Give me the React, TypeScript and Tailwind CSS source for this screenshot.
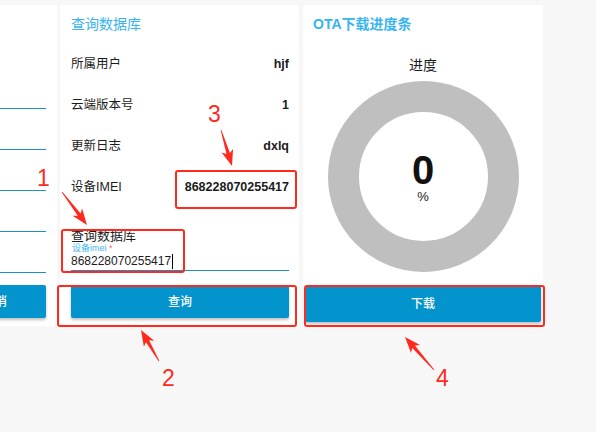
import React from 'react'

// Device OTA panel: query card + download progress card, with the red
// screenshot annotations (boxes, arrows, step numbers) laid over the top.

const RED = '#ff2a1d'

type Pt = [number, number]

function arrowPolygon(tail: Pt, tip: Pt) {
  const [tx, ty] = tail
  const [hx, hy] = tip
  const len = Math.hypot(hx - tx, hy - ty)
  const ux = (hx - tx) / len
  const uy = (hy - ty) / len
  const px = -uy
  const py = ux
  const headLen = 13
  const headW = 6
  const shaftW = 1.8
  const bx = hx - ux * headLen
  const by = hy - uy * headLen
  const pts: Pt[] = [
    [tx + px * 0.4, ty + py * 0.4],
    [bx + px * shaftW, by + py * shaftW],
    [bx - ux * 3 + px * headW, by - uy * 3 + py * headW],
    [hx, hy],
    [bx - ux * 3 - px * headW, by - uy * 3 - py * headW],
    [bx - px * shaftW, by - py * shaftW],
    [tx - px * 0.4, ty - py * 0.4],
  ]
  return pts.map((p) => p.join(',')).join(' ')
}

const arrows: { tail: Pt; tip: Pt }[] = [
  { tail: [62, 192], tip: [87, 225] },
  { tail: [221, 130], tip: [232, 166] },
  { tail: [159, 361], tip: [141, 330] },
  { tail: [434, 370], tip: [405, 337] },
]

const rows = [
  { label: '所属用户', value: 'hjf' },
  { label: '云端版本号', value: '1' },
  { label: '更新日志', value: 'dxlq' },
  { label: '设备IMEI', value: '868228070255417' },
]

export default function App() {
  return (
    <div className="relative h-[432px] w-[596px] overflow-hidden bg-[#f7f7f7] font-['Liberation_Sans','Noto_Sans_CJK_SC',sans-serif] text-[#1b1b1b]">
      <div className="flex pt-[5px]">
        {/* left card, mostly scrolled off */}
        <section className="-ml-[183px] mr-[3px] flex h-[321px] w-[240px] shrink-0 flex-col bg-white px-[11px] pt-[63px]">
          {[0, 1, 2, 3, 4].map((i) => (
            <div key={i} className="h-[41px] border-b border-[#1a8fc8]" />
          ))}
          <div className="mt-[12px] flex gap-[14px]">
            <button className="h-[33px] flex-1 rounded-[2px] bg-[#0494cd] text-[12px] font-medium text-white shadow-[0_2px_3px_rgba(0,0,0,0.25)]">
              确定
            </button>
            <button className="h-[33px] flex-1 rounded-[2px] bg-[#0494cd] text-[12px] font-medium text-white shadow-[0_2px_3px_rgba(0,0,0,0.25)]">
              取消
            </button>
          </div>
        </section>

        {/* query card */}
        <section className="mr-[4px] flex h-[321px] w-[239px] shrink-0 flex-col bg-white pl-[11px] pr-[10px] pt-[9px]">
          <h2 className="h-[20px] text-[14px] leading-[20px] text-[#38b4f0]">查询数据库</h2>
          <div className="mt-[10px]">
            {rows.map((r) => (
              <div key={r.label} className="flex h-[41px] items-center justify-between text-[12.5px]">
                <span>{r.label}</span>
                <span className="font-bold">{r.value}</span>
              </div>
            ))}
          </div>
          <div className="mt-[21px] border-b border-[#1a8fc8]">
            <div className="text-[13px] leading-[14px]">查询数据库</div>
            <div className="pl-[1px] text-[9px] leading-[10px] text-[#45b8f0]">
              设备imei <span className="text-[#ff6b6b]">*</span>
            </div>
            <div className="flex items-center text-[12px] leading-[17px]">
              868228070255417
              <span className="ml-[1px] inline-block h-[15px] w-px bg-black" />
            </div>
          </div>
          <button className="mt-[14px] h-[33px] rounded-[2px] bg-[#0494cd] text-[12px] font-medium text-white shadow-[0_2px_3px_rgba(0,0,0,0.25)]">
            查询
          </button>
        </section>

        {/* OTA progress card */}
        <section className="flex h-[321px] w-[240px] shrink-0 flex-col bg-white pt-[9px]">
          <h2 className="h-[20px] pl-[10px] text-[14px] font-semibold leading-[20px] text-[#38b4f0]">
            OTA下载进度条
          </h2>
          <div className="mt-[21px] text-center text-[14px] leading-[20px]">进度</div>
          <div className="mx-auto mt-[6px] flex h-[191px] w-[191px] flex-col items-center justify-center rounded-full border-[31px] border-[#bfbfbf]">
            <div className="text-[40px] font-bold leading-[40px] text-[#111]">0</div>
            <div className="text-[13px] leading-[14px]">%</div>
          </div>
          <button className="mx-[2px] mt-[14px] h-[36px] rounded-[2px] bg-[#0494cd] text-[12px] font-medium text-white shadow-[0_2px_3px_rgba(0,0,0,0.25)]">
            下载
          </button>
        </section>
      </div>

      {/* annotations */}
      <div className="absolute left-[61px] top-[229px] h-[44px] w-[124px] rounded-[3px] border-2 border-[#ff2a1d]" />
      <div className="absolute left-[57px] top-[285px] h-[42px] w-[240px] rounded-[3px] border-2 border-[#ff2a1d]" />
      <div className="absolute left-[175px] top-[170px] h-[39px] w-[122px] rounded-[3px] border-2 border-[#ff2a1d]" />
      <div className="absolute left-[304px] top-[285px] h-[42px] w-[241px] rounded-[3px] border-2 border-[#ff2a1d]" />

      <svg className="pointer-events-none absolute inset-0" width={596} height={432}>
        {arrows.map((a, i) => (
          <polygon key={i} points={arrowPolygon(a.tail, a.tip)} fill={RED} />
        ))}
      </svg>

      <span className="absolute left-[37px] top-[164px] text-[23px] leading-[28px] text-[#ff2a1d]">1</span>
      <span className="absolute left-[162px] top-[364px] text-[23px] leading-[28px] text-[#ff2a1d]">2</span>
      <span className="absolute left-[208px] top-[100px] text-[23px] leading-[28px] text-[#ff2a1d]">3</span>
      <span className="absolute left-[436px] top-[364px] text-[23px] leading-[28px] text-[#ff2a1d]">4</span>
    </div>
  )
}
